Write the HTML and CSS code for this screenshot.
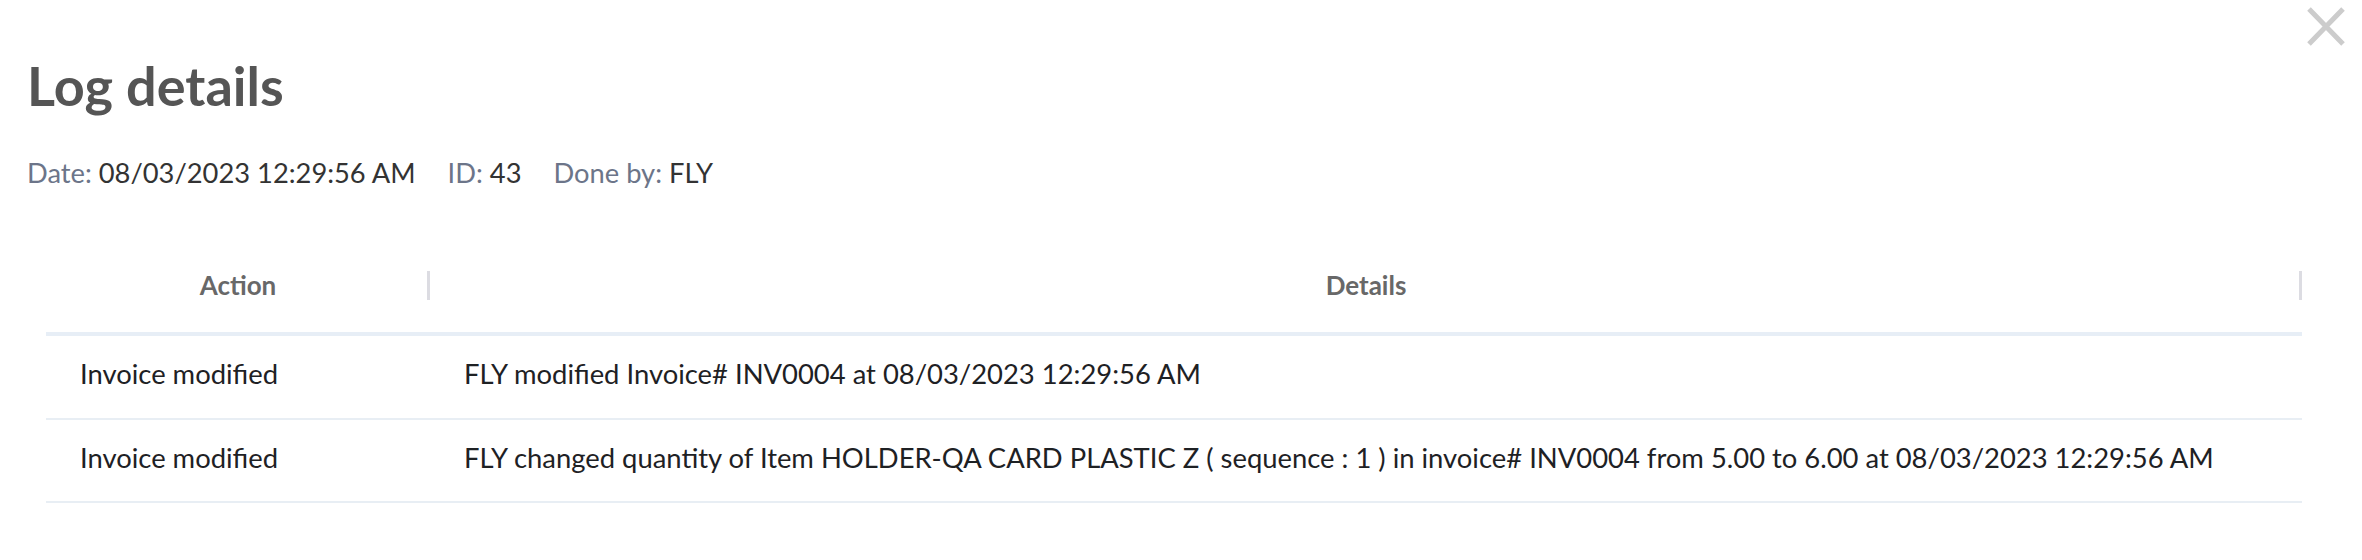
FILE: index.html
```html
<!DOCTYPE HTML>
<html>
<head>
  <title>Log details</title>
  <meta name="viewport" content="width=device-width, initial-scale=1">
  <link rel="stylesheet" href="styles.css">
</head>

<body>

<div class="modal">
  <button class="close" aria-label="Close">
    <svg width="38" height="39" viewBox="0 0 38 39">
      <path d="M2 2 L36 37 M36 2 L2 37" stroke="#cccccc" stroke-width="5" fill="none"/>
    </svg>
  </button>

  <h1 class="title">Log details</h1>

  <div class="meta">
    <span class="meta-item"><span class="label">Date:</span> 08/03/2023 12:29:56 AM</span>
    <span class="meta-item"><span class="label">ID:</span> 43</span>
    <span class="meta-item"><span class="label">Done by:</span> FLY</span>
  </div>

  <table class="log">
    <thead>
      <tr>
        <th class="col-action">Action</th>
        <th class="col-details">Details</th>
      </tr>
    </thead>
    <tbody>
      <tr>
        <td>Invoice modified</td>
        <td>FLY modified Invoice# INV0004 at 08/03/2023 12:29:56 AM</td>
      </tr>
      <tr>
        <td>Invoice modified</td>
        <td>FLY changed quantity of Item HOLDER-QA CARD PLASTIC Z ( sequence : 1 ) in invoice# INV0004 from 5.00 to 6.00 at 08/03/2023 12:29:56 AM</td>
      </tr>
    </tbody>
  </table>
</div>

</body>
</html>
```

FILE: styles.css
```css
body {
  margin: 0;
  background: #ffffff;
  font-family: Lato, "Open Sans", sans-serif;
}

.modal {
  position: relative;
  padding: 54px 60px 40px 27px;
}

.close {
  position: absolute;
  top: 7px;
  right: 17px;
  border: none;
  background: none;
  padding: 0;
  cursor: pointer;
  line-height: 0;
}

.title {
  margin: 0;
  font-size: 54px;
  font-weight: 700;
  line-height: 1.2;
  color: #555555;
}

.meta {
  margin-top: 38px;
  font-size: 27.3px;
  line-height: 1.2;
  color: #333333;
  display: flex;
  gap: 32px;
}

.label {
  color: #6c7589;
}

.log {
  margin-top: 49px;
  margin-left: 19px;
  width: 2256px;
  border-collapse: collapse;
}

.log th {
  position: relative;
  padding: 31px 0;
  font-size: 26px;
  font-weight: 700;
  line-height: 1.2;
  color: #686868;
  text-align: center;
  border-bottom: 4px solid #e7eef6;
}

.col-action {
  width: 384px;
}

.log th::after {
  content: "";
  position: absolute;
  right: 0;
  top: 32px;
  height: 29px;
  width: 3px;
  background: #dcdce2;
}

.log td {
  padding: 22px 34px 27px;
  font-size: 27.4px;
  line-height: 1.2;
  color: #1e2124;
  border-bottom: 2px solid #e8eef4;
  text-align: left;
}
```
